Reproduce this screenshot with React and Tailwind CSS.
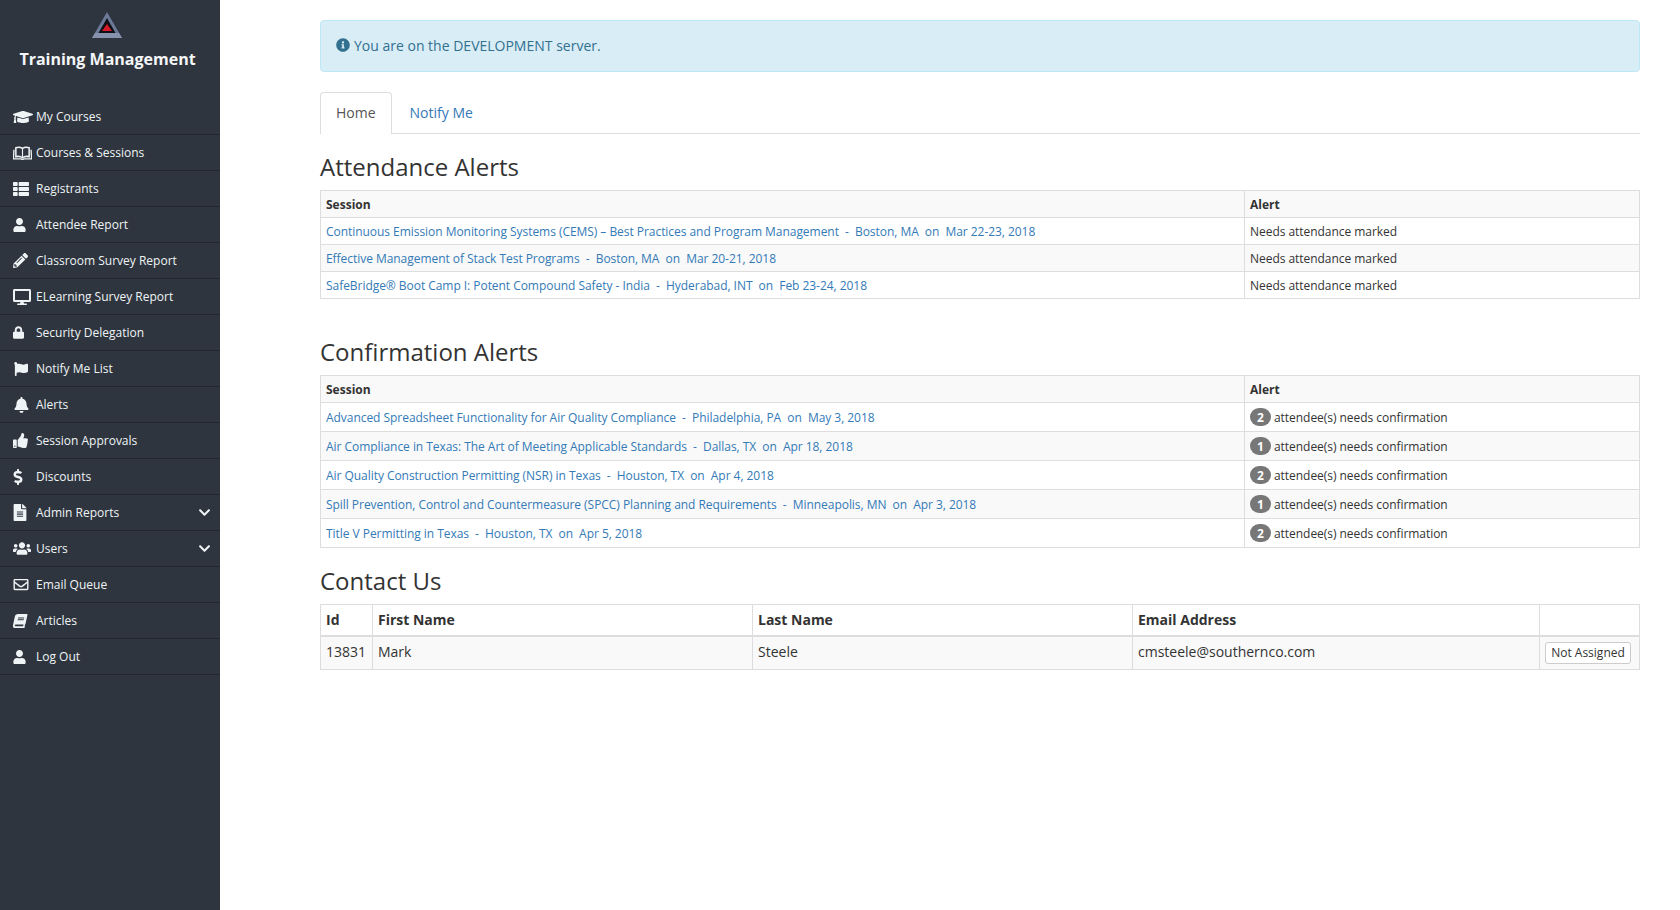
import React from "react";
import { FaGraduationCap, FaThList, FaUser, FaPencilAlt, FaDesktop, FaLock, FaFlag, FaBell, FaThumbsUp, FaDollarSign, FaFileAlt, FaUsers, FaRegEnvelope, FaBook, FaChevronDown, FaInfoCircle } from "react-icons/fa";

function OpenBook({ className }) {
  return (
    <svg viewBox="0 0 20 14" className={className} fill="none" stroke="currentColor">
      <path d="M3 1.5 C5.5 0.6 8 0.9 10 2.2 C12 0.9 14.5 0.6 17 1.5 V11 C14.5 10.2 12 10.6 10 12 C8 10.6 5.5 10.2 3 11 Z" strokeWidth="1.6" />
      <path d="M10 2.2 V12" strokeWidth="1.2" />
      <path d="M1 3.5 L0.4 13.2 H8.5 L10 14 L11.5 13.2 H19.6 L19 3.5" strokeWidth="1.4" />
    </svg>
  );
}
function TiltedBook({ className }) {
  return <FaBook className={`${className} -skew-x-12`} />;
}

const nav = [
  ["My Courses", FaGraduationCap, "w-[20px] h-[16px]"], ["Courses & Sessions", OpenBook, "w-[19px] h-[14px]"], ["Registrants", FaThList, "w-[16px] h-[16px]"], ["Attendee Report", FaUser, "w-[13px] h-[14px]"],
  ["Classroom Survey Report", FaPencilAlt, "w-[15px] h-[15px]"], ["ELearning Survey Report", FaDesktop, "w-[18px] h-[16px]"], ["Security Delegation", FaLock, "w-[11px] h-[13px]"], ["Notify Me List", FaFlag, "w-[16px] h-[14px]"],
  ["Alerts", FaBell, "w-[15px] h-[16px] ml-[1px]"], ["Session Approvals", FaThumbsUp, "w-[15px] h-[15px]"], ["Discounts", FaDollarSign, "w-[10px] h-[16px]"], ["Admin Reports", FaFileAlt, "w-[14px] h-[17px]", true],
  ["Users", FaUsers, "w-[18px] h-[15px]", true], ["Email Queue", FaRegEnvelope, "w-[16px] h-[15px]"], ["Articles", TiltedBook, "w-[14px] h-[14px]"], ["Log Out", FaUser, "w-[13px] h-[14px]"],
];

const attendance = [
  "Continuous Emission Monitoring Systems (CEMS) – Best Practices and Program Management  -  Boston, MA  on  Mar 22-23, 2018",
  "Effective Management of Stack Test Programs  -  Boston, MA  on  Mar 20-21, 2018",
  "SafeBridge® Boot Camp I: Potent Compound Safety - India  -  Hyderabad, INT  on  Feb 23-24, 2018",
];
const confirmation = [
  ["Advanced Spreadsheet Functionality for Air Quality Compliance  -  Philadelphia, PA  on  May 3, 2018", 2],
  ["Air Compliance in Texas: The Art of Meeting Applicable Standards  -  Dallas, TX  on  Apr 18, 2018", 1],
  ["Air Quality Construction Permitting (NSR) in Texas  -  Houston, TX  on  Apr 4, 2018", 2],
  ["Spill Prevention, Control and Countermeasure (SPCC) Planning and Requirements  -  Minneapolis, MN  on  Apr 3, 2018", 1],
  ["Title V Permitting in Texas  -  Houston, TX  on  Apr 5, 2018", 2],
];

function AlertTable({ rows, renderAlert, rowClass }) {
  return (
    <table className="w-full table-fixed border-collapse border border-[#ddd] text-[12px] leading-[17px] text-[#333]">
      <colgroup><col className="w-[924px]" /><col /></colgroup>
      <thead>
        <tr className="bg-[#f9f9f9]">
          <th className="h-[27px] border border-[#ddd] px-[5px] text-left font-bold">Session</th>
          <th className="h-[27px] border border-[#ddd] px-[5px] text-left font-bold">Alert</th>
        </tr>
      </thead>
      <tbody>
        {rows.map((r, i) => (
          <tr key={i} className={i % 2 ? "bg-[#f9f9f9]" : "bg-white"}>
            <td className={`border border-[#ddd] px-[5px] whitespace-pre tracking-[-0.045px] ${rowClass}`}><a className="text-[#337ab7]">{Array.isArray(r) ? r[0] : r}</a></td>
            <td className={`border border-[#ddd] px-[5px] tracking-[-0.045px] ${rowClass}`}>{renderAlert(r)}</td>
          </tr>
        ))}
      </tbody>
    </table>
  );
}

export default function App() {
  return (
    <div className="flex min-h-[910px] bg-white font-['Open_Sans','Noto_Sans',sans-serif] text-[#333]">
      <aside className="w-[220px] shrink-0 bg-[#2f353e] text-white">
        <div className="flex h-[99px] flex-col items-center pt-[12px] pr-[5px]">
          <svg width="30" height="26" viewBox="0 0 30 26" className="mr-[1px]">
            <path d="M15 0 L30 26 H0 Z" fill="#6c7a99" />
            <path d="M0 26 L3 21 H27 L30 26 Z" fill="#8793ad" />
            <path d="M15 6 L23.5 21 H6.5 Z" fill="#0e1014" />
            <path d="M15 12 L20 19 H10 Z" fill="#d8192a" />
          </svg>
          <div className="mt-[9px] text-[16px] font-bold leading-[24px] text-[#f4f6f8]">Training Management</div>
        </div>
        <nav>
          {nav.map(([label, Icon, size, more]) => (
            <div key={label} className="flex h-[36px] items-center border-b border-[#23282f] pl-[13px] pr-[9px] text-[12px] text-[#eef4f6]">
              <span className="flex w-[23px] shrink-0 items-center"><Icon className={size} /></span>
              <span className="flex-1 whitespace-nowrap">{label}</span>
              {more && <FaChevronDown className="h-[13px] w-[13px]" />}
            </div>
          ))}
        </nav>
      </aside>
      <main className="ml-[100px] w-[1320px] pt-[20px]">
        <div className="flex h-[52px] items-center rounded-[4px] border border-[#bce8f1] bg-[#d9edf7] px-[15px] pb-[2px] text-[14px] text-[#31708f]">
          <FaInfoCircle className="mr-[4px] h-[14px] w-[14px]" />You are on the DEVELOPMENT server.
        </div>
        <div className="mt-[20px] flex h-[42px] border-b border-[#ddd] text-[14px]">
          <div className="flex h-[42px] items-center rounded-t-[4px] border border-b-0 border-[#ddd] bg-white px-[15px] pb-[2px] text-[#555]">Home</div>
          <div className="ml-[3px] flex h-[41px] items-center px-[15px] text-[#337ab7]">Notify Me</div>
        </div>
        <h2 className="mt-[20px] mb-[10px] text-[24px] font-normal leading-[26px]">Attendance Alerts</h2>
        <AlertTable rows={attendance} rowClass="h-[27px]" renderAlert={() => "Needs attendance marked"} />
        <h2 className="mt-[40px] mb-[10px] text-[24px] font-normal leading-[26px]">Confirmation Alerts</h2>
        <AlertTable rows={confirmation} rowClass="h-[29px]" renderAlert={(r) => (
          <span className="flex items-center"><span className="mr-[3px] flex h-[18px] w-[21px] items-center justify-center rounded-full bg-[#777] text-[12px] font-bold text-white">{r[1]}</span>attendee(s) needs confirmation</span>
        )} />
        <h2 className="mt-[20px] mb-[10px] text-[24px] font-normal leading-[26px]">Contact Us</h2>
        <table className="w-full table-fixed border-collapse border border-[#ddd] text-[14px] leading-[20px] text-[#333]">
          <colgroup><col className="w-[52px]" /><col className="w-[380px]" /><col className="w-[380px]" /><col className="w-[407px]" /><col /></colgroup>
          <thead>
            <tr>
              {["Id", "First Name", "Last Name", "Email Address", ""].map((h) => (
                <th key={h} className="border border-b-2 border-[#ddd] px-[5px] py-[5px] text-left font-bold">{h}</th>
              ))}
            </tr>
          </thead>
          <tbody>
            <tr className="bg-[#f9f9f9]">
              <td className="border border-[#ddd] px-[5px] pb-[2px]">13831</td>
              <td className="border border-[#ddd] px-[5px] pb-[2px]">Mark</td>
              <td className="border border-[#ddd] px-[5px] pb-[2px]">Steele</td>
              <td className="border border-[#ddd] px-[5px] pb-[2px]">cmsteele@southernco.com</td>
              <td className="border border-[#ddd] px-[5px] py-[5px]">
                <span className="block h-[22px] w-[86px] rounded-[3px] border border-[#ccc] bg-white text-center text-[12px] leading-[20px]">Not Assigned</span>
              </td>
            </tr>
          </tbody>
        </table>
      </main>
    </div>
  );
}
